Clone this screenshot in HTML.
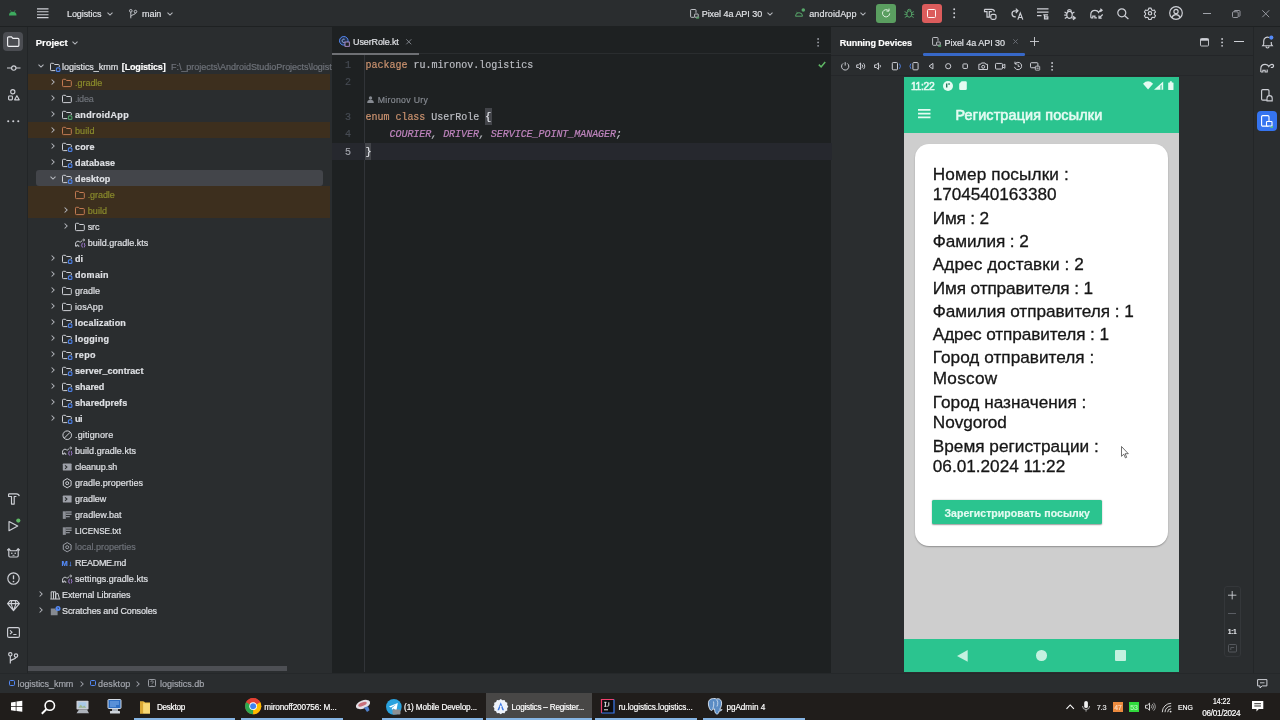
<!DOCTYPE html>
<html lang="ru"><head><meta charset="utf-8"><title>Logistics – UserRole.kt</title>
<style>
*{box-sizing:border-box;margin:0;padding:0}
html,body{width:1280px;height:720px;overflow:hidden;background:#2a2d2f}
body{font-family:"Liberation Sans",sans-serif;font-size:9px;color:#dfe1e5;position:relative;font-variant-ligatures:none}
.abs,.sel,.exc,.t{position:absolute}
.t{white-space:nowrap;-webkit-text-stroke-width:.18px;font-variant-ligatures:none!important}
svg{display:block;overflow:visible}
.exc{left:27.700px;width:302px;height:16px;background:#3d2f1e}
.sel{left:36px;width:287px;height:16px;background:#43454a;border-radius:3px}
.ph{color:#151515}
</style></head><body><div id="root" style="position:absolute;left:0;top:0;width:1280px;height:720px;will-change:transform">

<div class="abs" style="left:0;top:0;width:1280px;height:26.500px;background:#2a2d2f"></div>
<div class="abs" style="left:0;top:26.200px;width:1280px;height:1px;background:#1e2122"></div>
<div class="abs" style="left:26.700px;top:27px;width:1px;height:646px;background:#222527"></div>
<div class="abs" style="left:331.500px;top:27px;width:499.800px;height:646px;background:#1e2122"></div>
<div class="abs" style="left:1253px;top:27px;width:1px;height:646px;background:#232628"></div>
<div class="abs" style="left:0;top:672.500px;width:1280px;height:1px;background:#25282a"></div>
<svg class="abs" style="left:8.5px;top:9.7px" width="7.5" height="5.5" viewBox="0 0 7.5 5.5" ><path d="M0 5.500a3.750 3.750 0 0 1 7.500 0z" fill="#3dab5f"/><path d="M1.300 .3l1 1.500M6.200 .3l-1 1.500" stroke="#3dab5f" stroke-width=".7"/></svg>
<svg class="abs" style="left:37px;top:8px" width="11.5" height="10.5" viewBox="0 0 11.5 10.5" ><path d="M0 .9h11.500M0 3.800h11.500M0 6.700h11.500M0 9.600h11.500" stroke="#ced0d6" stroke-width="1.100"/></svg>
<div class="t" style="left:67.00px;top:10px;font:9px/1 'Liberation Sans',sans-serif;color:#dfe1e5;letter-spacing:-0.080px">Logistics</div>
<svg class="abs" style="left:107px;top:11.8px" width="6" height="4" viewBox="0 0 6 4" ><path d="M.5 .6L3 3.100 5.500 .6" fill="none" stroke="#b4b7bd" stroke-width="1.050"/></svg>
<svg class="abs" style="left:128.5px;top:8.8px" width="8.5" height="9.5" viewBox="0 0 8.5 9.5" ><circle cx="1.800" cy="1.800" r="1.300" fill="none" stroke="#ced0d6" stroke-width=".9"/><circle cx="6.500" cy="2.600" r="1.300" fill="none" stroke="#ced0d6" stroke-width=".9"/><path d="M1.800 3.100v6.200M6.500 3.900c0 2.200-4.700 1.600-4.700 3.600" fill="none" stroke="#ced0d6" stroke-width=".9"/></svg>
<div class="t" style="left:142.00px;top:10px;font:9px/1 'Liberation Sans',sans-serif;color:#dfe1e5;letter-spacing:-0.054px">main</div>
<svg class="abs" style="left:167.3px;top:11.8px" width="6" height="4" viewBox="0 0 6 4" ><path d="M.5 .6L3 3.100 5.500 .6" fill="none" stroke="#b4b7bd" stroke-width="1.050"/></svg>
<svg class="abs" style="left:689.5px;top:9px" width="9" height="9.5" viewBox="0 0 9 9.5" ><path d="M4.300 8.300H1.400a.8.800 0 0 1-.8-.8V1.300a.8.800 0 0 1 .8-.8h3.800a.8.800 0 0 1 .8.800v2.500" fill="none" stroke="#ced0d6" stroke-width=".9"/><rect x="4.600" y="5" width="3.600" height="3.200" rx=".4" fill="none" stroke="#ced0d6" stroke-width=".9"/><path d="M6.200 9.300l2.600-1.500v1.500z" fill="#57a66a" stroke="#57a66a" stroke-width=".6"/></svg>
<div class="t" style="left:701.70px;top:10px;font:9px/1 'Liberation Sans',sans-serif;color:#dfe1e5;letter-spacing:-0.036px">Pixel 4a API 30</div>
<svg class="abs" style="left:767.3px;top:11.8px" width="6" height="4" viewBox="0 0 6 4" ><path d="M.5 .6L3 3.100 5.500 .6" fill="none" stroke="#b4b7bd" stroke-width="1.050"/></svg>
<svg class="abs" style="left:795px;top:8px" width="10.5" height="9" viewBox="0 0 10.5 9" ><path d="M.5 8.200a3.500 3.500 0 0 1 7 0z" fill="none" stroke="#57a66a" stroke-width="1"/><path d="M1.600 3.800l1 1.300" stroke="#57a66a" stroke-width=".8"/><circle cx="8.300" cy="2" r="1.800" fill="#57a66a"/></svg>
<div class="t" style="left:809.20px;top:10px;font:9px/1 'Liberation Sans',sans-serif;color:#dfe1e5;letter-spacing:0.145px">androidApp</div>
<svg class="abs" style="left:860px;top:11.8px" width="6" height="4" viewBox="0 0 6 4" ><path d="M.5 .6L3 3.100 5.500 .6" fill="none" stroke="#b4b7bd" stroke-width="1.050"/></svg>
<div class="abs" style="left:876.200px;top:3.700px;width:20px;height:19.600px;background:#5a9e60;border-radius:3px"></div>
<svg class="abs" style="left:881px;top:8.3px" width="10.5" height="10.5" viewBox="0 0 10.5 10.5" ><path d="M8.700 5.400a3.600 3.600 0 1 1-1.100-2.700" fill="none" stroke="#dff0e0" stroke-width="1"/><path d="M8 .6v2.500H5.500" fill="none" stroke="#dff0e0" stroke-width="1"/></svg>
<svg class="abs" style="left:903.5px;top:8.2px" width="10.5" height="10.5" viewBox="0 0 10.5 10.5" ><ellipse cx="5.250" cy="6" rx="2.500" ry="3.200" fill="none" stroke="#57a66a" stroke-width="1"/><path d="M3.500 3a1.750 1.750 0 0 1 3.500 0M.6 3.600l2.300 1.200M9.900 3.600L7.600 4.800M.3 6.400h2.400M10.200 6.400H7.800M.8 9.500L3 8.200M9.700 9.500L7.500 8.200" fill="none" stroke="#57a66a" stroke-width=".9"/></svg>
<div class="abs" style="left:921.700px;top:3.700px;width:20px;height:19.600px;background:#db5c5c;border-radius:3px"></div>
<div class="abs" style="left:927.200px;top:9px;width:9px;height:9px;border:1.100px solid #fff3f3;border-radius:1.500px"></div>
<svg class="abs" style="left:952.8px;top:8.2px" width="2.4" height="10.5" viewBox="0 0 2.4 10.5" ><circle cx="1.200" cy="1.200" r=".95" fill="#ced0d6"/><circle cx="1.200" cy="5.250" r=".95" fill="#ced0d6"/><circle cx="1.200" cy="9.300" r=".95" fill="#ced0d6"/></svg>
<svg class="abs" style="left:983.5px;top:7.5px" width="13" height="12" viewBox="0 0 13 12" ><path d="M.5 1.300h7.300c1.500 0 2.500 1 2.700 2.300M.5 1.300v2.400h2.500v5.500h2.300V3.700H7.800" fill="none" stroke="#ced0d6" stroke-width="1.200"/><rect x="6.800" y="6.300" width="5.200" height="5" rx="1.500" fill="none" stroke="#ced0d6" stroke-width="1.200"/></svg>
<svg class="abs" style="left:1010.5px;top:7.5px" width="12.5" height="12" viewBox="0 0 12.5 12" ><path d="M6.300 2.800H4a3 3 0 0 0 0 6h.8M4.800 .6l2.200 2.200-2.200 2.200" fill="none" stroke="#ced0d6" stroke-width="1.200"/><path d="M6.800 11.600L9.300 5l2.500 6.600M7.700 9.500h3.300" fill="none" stroke="#ced0d6" stroke-width="1.200"/></svg>
<svg class="abs" style="left:1037px;top:8px" width="11.5" height="11.5" viewBox="0 0 11.5 11.5" ><path d="M0 .8h11.500M0 4.200h11.500M0 7.600h4.500" fill="none" stroke="#ced0d6" stroke-width="1.200"/><path d="M6.300 6.800h4.700M7.500 6.800v4h3.300V8.900H7.500" fill="none" stroke="#ced0d6" stroke-width="1.200"/></svg>
<svg class="abs" style="left:1063.5px;top:7.5px" width="12" height="12" viewBox="0 0 12 12" ><ellipse cx="5.500" cy="6.800" rx="2.700" ry="3.500" fill="none" stroke="#ced0d6" stroke-width="1.200"/><path d="M3.600 3.600a1.900 1.900 0 0 1 3.800 0M.6 4l2.400 1.400M10.400 4L8 5.400M.2 7.200h2.600M.8 10.600l2.300-1.500" fill="none" stroke="#ced0d6" stroke-width="1.200"/><path d="M9 8.300l2.300 1.700L9 11.700M11.300 10H7.500" fill="none" stroke="#ced0d6" stroke-width="1.200"/></svg>
<svg class="abs" style="left:1089.5px;top:7.5px" width="13.5" height="12" viewBox="0 0 13.5 12" ><path d="M.8 9.800V6.600c0-2.600 1.700-4.300 4.200-4.300 1.700 0 3 .8 3.500 2.100.7-1.300 1.700-2.100 3-2.100M.8 9.800h2V8.100h2.100v1.700h2" fill="none" stroke="#ced0d6" stroke-width="1.200"/><path d="M12.700 6.500L9 10.200M9 7.500v2.700h2.700" fill="none" stroke="#ced0d6" stroke-width="1.200"/><path d="M10.300 .8l1.800 1.500-1.800 1.500" fill="none" stroke="#ced0d6" stroke-width="1.200"/></svg>
<svg class="abs" style="left:1117px;top:8.3px" width="12" height="11" viewBox="0 0 12 11" ><circle cx="4.800" cy="4.800" r="4" fill="none" stroke="#ced0d6" stroke-width="1.200"/><path d="M7.700 7.700l3.700 3.300" fill="none" stroke="#ced0d6" stroke-width="1.200"/></svg>
<svg class="abs" style="left:1143.5px;top:7.3px" width="12" height="12.6" viewBox="0 0 12 12.6" ><path d="M4.700 .6h2.600l.4 1.700 1.500.9 1.700-.5 1.300 2.200-1.300 1.200v1.700l1.300 1.200-1.300 2.200-1.700-.5-1.500.9-.4 1.700H4.700l-.4-1.700-1.500-.9-1.700.5L-.2 9l1.300-1.200V6.100L-.2 4.900l1.300-2.200 1.700.5 1.500-.9z" transform="translate(.55 .6) scale(.9)" fill="none" stroke="#ced0d6" stroke-width="1.200" stroke-linejoin="round"/><circle cx="6" cy="6.300" r="1.700" fill="none" stroke="#ced0d6" stroke-width="1.200"/></svg>
<svg class="abs" style="left:1169px;top:6.3px" width="14" height="14" viewBox="0 0 14 14" ><circle cx="7" cy="7" r="6.300" fill="none" stroke="#ced0d6" stroke-width="1.200"/><circle cx="7" cy="5.500" r="2.100" fill="none" stroke="#ced0d6" stroke-width="1.200"/><path d="M2.900 11.700a4.300 4.300 0 0 1 8.200 0" fill="none" stroke="#ced0d6" stroke-width="1.200"/></svg>
<div class="abs" style="left:1202.800px;top:13px;width:8.200px;height:1px;background:#a0a3aa"></div>
<svg class="abs" style="left:1232px;top:9.5px" width="8.5" height="8" viewBox="0 0 8.5 8" ><rect x=".5" y="1.800" width="5.700" height="5.700" rx="1" fill="none" stroke="#a0a3aa" stroke-width=".9"/><path d="M2.200 1.800V1.300a.8.800 0 0 1 .8-.8h4.200a.8.800 0 0 1 .8.800v4.200a.8.800 0 0 1-.8.800h-.6" fill="none" stroke="#a0a3aa" stroke-width=".9"/></svg>
<svg class="abs" style="left:1262px;top:9.7px" width="7.5" height="7.5" viewBox="0 0 7.5 7.5" ><path d="M.3 .3l6.900 6.900M7.200 .3L.3 7.200" stroke="#a0a3aa" stroke-width=".9"/></svg>
<div class="abs" style="left:3.300px;top:31.700px;width:20px;height:19.600px;background:#4b4d52;border-radius:4px"></div>
<svg class="abs" style="left:7px;top:36px" width="12.5" height="11" viewBox="0 0 12.5 11" ><path d="M.6 1.800a1 1 0 0 1 1-1h2.900l1.400 1.500h5a1 1 0 0 1 1 1v6a1 1 0 0 1-1 1H1.600a1 1 0 0 1-1-1z" fill="none" stroke="#f0f1f4" stroke-width="1.150"/></svg>
<svg class="abs" style="left:6.5px;top:64.5px" width="13.5" height="6" viewBox="0 0 13.5 6" ><circle cx="6.750" cy="3" r="2.200" fill="none" stroke="#ced0d6" stroke-width="1.150"/><path d="M0 3h4.500M9 3h4.500" fill="none" stroke="#ced0d6" stroke-width="1.150"/></svg>
<svg class="abs" style="left:7.5px;top:88.5px" width="12" height="12.5" viewBox="0 0 12 12.5" ><circle cx="4.800" cy="2.700" r="2.100" fill="none" stroke="#ced0d6" stroke-width="1.150"/><rect x=".6" y="7" width="3.800" height="3.800" rx=".8" fill="none" stroke="#ced0d6" stroke-width="1.150"/><path d="M8.900 6.700l2.300 4.100H6.600z" fill="none" stroke="#ced0d6" stroke-width="1.150" stroke-linejoin="round"/></svg>
<svg class="abs" style="left:7px;top:119.6px" width="12.5" height="2.4" viewBox="0 0 12.5 2.4" ><circle cx="1.200" cy="1.200" r="1.050" fill="#ced0d6"/><circle cx="6.250" cy="1.200" r="1.050" fill="#ced0d6"/><circle cx="11.300" cy="1.200" r="1.050" fill="#ced0d6"/></svg>
<svg class="abs" style="left:7.5px;top:492px" width="12" height="13" viewBox="0 0 12 13" ><path d="M.6 1.800h7.800c1.500 0 2.600 1 2.900 2.400M.6 1.800v2.700h2.900v7.600h2.700V4.500h2.200" fill="none" stroke="#ced0d6" stroke-width="1.150" stroke-linejoin="round"/></svg>
<svg class="abs" style="left:7.5px;top:518px" width="13" height="13.5" viewBox="0 0 13 13.5" ><path d="M1 3.500l8.700 4.600L1 12.700z" fill="none" stroke="#ced0d6" stroke-width="1.150" stroke-linejoin="round"/><circle cx="10.300" cy="2.600" r="2.100" fill="#5fb865"/></svg>
<svg class="abs" style="left:7px;top:546px" width="13" height="12" viewBox="0 0 13 12" ><path d="M1.800 2.500l1.700 2.200h6l1.700-2.200v7.300a1.200 1.200 0 0 1-1.200 1.200H3a1.200 1.200 0 0 1-1.200-1.200zM0 3.800h1.800M11.200 3.800H13" fill="none" stroke="#ced0d6" stroke-width="1.150" stroke-linejoin="round"/><circle cx="4.800" cy="7.300" r=".8" fill="#ced0d6"/><circle cx="8.200" cy="7.300" r=".8" fill="#ced0d6"/><path d="M5.500 9.300h2" stroke="#ced0d6" stroke-width=".9"/></svg>
<svg class="abs" style="left:7px;top:572px" width="13" height="13" viewBox="0 0 13 13" ><circle cx="6.500" cy="6.500" r="5.700" fill="none" stroke="#ced0d6" stroke-width="1.150"/><path d="M6.500 3.300v4" stroke="#ced0d6" stroke-width="1.300"/><circle cx="6.500" cy="9.500" r=".85" fill="#ced0d6"/></svg>
<svg class="abs" style="left:7px;top:599.7px" width="13" height="11.3" viewBox="0 0 13 11.3" ><path d="M3.200 .6h6.600l2.600 3L6.500 10.600.6 3.600zM.6 3.600h11.800M4.800 .6L4 3.600l2.500 7 2.500-7L8.200 .6" fill="none" stroke="#ced0d6" stroke-width="1.150" stroke-linejoin="round"/></svg>
<svg class="abs" style="left:7px;top:626.6px" width="13" height="11" viewBox="0 0 13 11" ><rect x=".6" y=".6" width="11.800" height="9.800" rx="1.500" fill="none" stroke="#ced0d6" stroke-width="1.150"/><path d="M3 3.300l2 1.900-2 1.900M6.300 7.500h3.200" fill="none" stroke="#ced0d6" stroke-width="1.150"/></svg>
<svg class="abs" style="left:8px;top:652.3px" width="10.5" height="12" viewBox="0 0 10.5 12" ><circle cx="2.300" cy="2.300" r="1.700" fill="none" stroke="#ced0d6" stroke-width="1.150"/><circle cx="8" cy="3.600" r="1.700" fill="none" stroke="#ced0d6" stroke-width="1.150"/><path d="M2.300 4v7.500M8 5.300c0 2.600-5.700 1.600-5.700 4.200" fill="none" stroke="#ced0d6" stroke-width="1.150"/></svg>
<div class="t" style="left:35.80px;top:38px;font:bold 9.5px/1 'Liberation Sans',sans-serif;color:#fff;letter-spacing:-0.074px">Project</div>
<svg class="abs" style="left:72px;top:40.6px" width="6" height="4" viewBox="0 0 6 4" ><path d="M.5 .6L3 3.100 5.500 .6" fill="none" stroke="#b4b7bd" stroke-width="1.050"/></svg>
<div class="abs" style="left:28px;top:27px;width:303.500px;height:646px;overflow:hidden"><div class="abs" style="left:-28px;top:-27px;width:400px;height:700px">
<svg class="abs" style="left:38px;top:64.3px" width="6" height="4" viewBox="0 0 6 4" ><path d="M.5 .6L3 3.100 5.500 .6" fill="none" stroke="#b4b7bd" stroke-width="1.050"/></svg>
<svg class="abs" style="left:49.5px;top:61.6px" width="10.5" height="10" viewBox="0 0 10.5 10" ><path d="M5.300 8.600H1.400a.9.9 0 0 1-.9-.9V2.200a.9.9 0 0 1 .9-.9h2.100l1.100 1.200h3.800a.9.9 0 0 1 .9.900v1.600" fill="none" stroke="#ced0d6" stroke-width="1"/><rect x="6.400" y="5.900" width="3.500" height="3.500" rx="1" fill="none" stroke="#4d80e6" stroke-width="1.150"/></svg>
<div class="t" style="left:62.00px;top:63px;font:9px/1 'Liberation Sans',sans-serif;color:#dfe1e5;letter-spacing:-0.017px">logistics_kmm</div>
<div class="t" style="left:121.80px;top:63px;font:bold 9px/1 'Liberation Sans',sans-serif;color:#fff;letter-spacing:-0.165px">[Logistics]</div>
<div class="t" style="left:171.00px;top:63px;font:9px/1 'Liberation Sans',sans-serif;color:#6f737a;letter-spacing:-0.033px">F:\_projects\AndroidStudioProjects\logistics_kmm</div>
<div class="exc" style="top:74px"></div>
<svg class="abs" style="left:51px;top:79.3px" width="4" height="6" viewBox="0 0 4 6" ><path d="M.6 .5L3.100 3 .6 5.500" fill="none" stroke="#b4b7bd" stroke-width="1.050"/></svg>
<svg class="abs" style="left:61.8px;top:77.6px" width="10.5" height="10" viewBox="0 0 10.5 10" ><path d="M.5 2.200a.9.9 0 0 1 .9-.9h2.100l1.100 1.200h3.800a.9.9 0 0 1 .9.900v4.300a.9.9 0 0 1-.9.900H1.400a.9.9 0 0 1-.9-.9z" fill="none" stroke="#c27a52" stroke-width="1"/></svg>
<div class="t" style="left:75.00px;top:79px;font:9px/1 'Liberation Sans',sans-serif;color:#8a8b2c;letter-spacing:-0.033px">.gradle</div>
<svg class="abs" style="left:51px;top:95.3px" width="4" height="6" viewBox="0 0 4 6" ><path d="M.6 .5L3.100 3 .6 5.500" fill="none" stroke="#b4b7bd" stroke-width="1.050"/></svg>
<svg class="abs" style="left:61.8px;top:93.6px" width="10.5" height="10" viewBox="0 0 10.5 10" ><path d="M.5 2.200a.9.9 0 0 1 .9-.9h2.100l1.100 1.200h3.800a.9.9 0 0 1 .9.900v4.300a.9.9 0 0 1-.9.900H1.400a.9.9 0 0 1-.9-.9z" fill="none" stroke="#ced0d6" stroke-width="1"/></svg>
<div class="t" style="left:75.00px;top:95px;font:9px/1 'Liberation Sans',sans-serif;color:#6f737a;letter-spacing:-0.206px">.idea</div>
<svg class="abs" style="left:51px;top:111.3px" width="4" height="6" viewBox="0 0 4 6" ><path d="M.6 .5L3.100 3 .6 5.500" fill="none" stroke="#b4b7bd" stroke-width="1.050"/></svg>
<svg class="abs" style="left:61.8px;top:109.6px" width="10.5" height="10" viewBox="0 0 10.5 10" ><path d="M5.300 8.600H1.400a.9.9 0 0 1-.9-.9V2.200a.9.9 0 0 1 .9-.9h2.100l1.100 1.200h3.800a.9.9 0 0 1 .9.900v1.600" fill="none" stroke="#ced0d6" stroke-width="1"/><rect x="6.400" y="5.900" width="3.500" height="3.500" rx="1" fill="none" stroke="#4c9c64" stroke-width="1.150"/></svg>
<div class="t" style="left:75.00px;top:111px;font:bold 9px/1 'Liberation Sans',sans-serif;color:#dfe1e5;letter-spacing:0.350px">androidApp</div>
<div class="exc" style="top:122px"></div>
<svg class="abs" style="left:51px;top:127.30000000000001px" width="4" height="6" viewBox="0 0 4 6" ><path d="M.6 .5L3.100 3 .6 5.500" fill="none" stroke="#b4b7bd" stroke-width="1.050"/></svg>
<svg class="abs" style="left:61.8px;top:125.6px" width="10.5" height="10" viewBox="0 0 10.5 10" ><path d="M.5 2.200a.9.9 0 0 1 .9-.9h2.100l1.100 1.200h3.800a.9.9 0 0 1 .9.900v4.300a.9.9 0 0 1-.9.900H1.400a.9.9 0 0 1-.9-.9z" fill="none" stroke="#c27a52" stroke-width="1"/></svg>
<div class="t" style="left:75.00px;top:127px;font:9px/1 'Liberation Sans',sans-serif;color:#8a8b2c;letter-spacing:0.117px">build</div>
<svg class="abs" style="left:51px;top:143.3px" width="4" height="6" viewBox="0 0 4 6" ><path d="M.6 .5L3.100 3 .6 5.500" fill="none" stroke="#b4b7bd" stroke-width="1.050"/></svg>
<svg class="abs" style="left:61.8px;top:141.6px" width="10.5" height="10" viewBox="0 0 10.5 10" ><path d="M5.300 8.600H1.400a.9.9 0 0 1-.9-.9V2.200a.9.9 0 0 1 .9-.9h2.100l1.100 1.200h3.800a.9.9 0 0 1 .9.900v1.600" fill="none" stroke="#ced0d6" stroke-width="1"/><rect x="6.400" y="5.900" width="3.500" height="3.500" rx="1" fill="none" stroke="#4d80e6" stroke-width="1.150"/></svg>
<div class="t" style="left:75.00px;top:143px;font:bold 9px/1 'Liberation Sans',sans-serif;color:#dfe1e5;letter-spacing:0.171px">core</div>
<svg class="abs" style="left:51px;top:159.3px" width="4" height="6" viewBox="0 0 4 6" ><path d="M.6 .5L3.100 3 .6 5.500" fill="none" stroke="#b4b7bd" stroke-width="1.050"/></svg>
<svg class="abs" style="left:61.8px;top:157.6px" width="10.5" height="10" viewBox="0 0 10.5 10" ><path d="M5.300 8.600H1.400a.9.9 0 0 1-.9-.9V2.200a.9.9 0 0 1 .9-.9h2.100l1.100 1.200h3.800a.9.9 0 0 1 .9.900v1.600" fill="none" stroke="#ced0d6" stroke-width="1"/><rect x="6.400" y="5.900" width="3.500" height="3.500" rx="1" fill="none" stroke="#4d80e6" stroke-width="1.150"/></svg>
<div class="t" style="left:75.00px;top:159px;font:bold 9px/1 'Liberation Sans',sans-serif;color:#dfe1e5;letter-spacing:0.146px">database</div>
<div class="sel" style="top:170px"></div>
<svg class="abs" style="left:50px;top:176.3px" width="6" height="4" viewBox="0 0 6 4" ><path d="M.5 .6L3 3.100 5.500 .6" fill="none" stroke="#b4b7bd" stroke-width="1.050"/></svg>
<svg class="abs" style="left:61.8px;top:173.6px" width="10.5" height="10" viewBox="0 0 10.5 10" ><path d="M5.300 8.600H1.400a.9.9 0 0 1-.9-.9V2.200a.9.9 0 0 1 .9-.9h2.100l1.100 1.200h3.800a.9.9 0 0 1 .9.900v1.600" fill="none" stroke="#ced0d6" stroke-width="1"/><rect x="6.400" y="5.900" width="3.500" height="3.500" rx="1" fill="none" stroke="#4d80e6" stroke-width="1.150"/></svg>
<div class="t" style="left:75.00px;top:175px;font:bold 9px/1 'Liberation Sans',sans-serif;color:#dfe1e5;letter-spacing:0.141px">desktop</div>
<div class="exc" style="top:186px"></div>
<svg class="abs" style="left:74.8px;top:189.6px" width="10.5" height="10" viewBox="0 0 10.5 10" ><path d="M.5 2.200a.9.9 0 0 1 .9-.9h2.100l1.100 1.200h3.800a.9.9 0 0 1 .9.900v4.300a.9.9 0 0 1-.9.900H1.400a.9.9 0 0 1-.9-.9z" fill="none" stroke="#c27a52" stroke-width="1"/></svg>
<div class="t" style="left:87.70px;top:191px;font:9px/1 'Liberation Sans',sans-serif;color:#8a8b2c;letter-spacing:-0.076px">.gradle</div>
<div class="exc" style="top:202px"></div>
<svg class="abs" style="left:64px;top:207.3px" width="4" height="6" viewBox="0 0 4 6" ><path d="M.6 .5L3.100 3 .6 5.500" fill="none" stroke="#b4b7bd" stroke-width="1.050"/></svg>
<svg class="abs" style="left:74.8px;top:205.6px" width="10.5" height="10" viewBox="0 0 10.5 10" ><path d="M.5 2.200a.9.9 0 0 1 .9-.9h2.100l1.100 1.200h3.800a.9.9 0 0 1 .9.900v4.300a.9.9 0 0 1-.9.900H1.400a.9.9 0 0 1-.9-.9z" fill="none" stroke="#c27a52" stroke-width="1"/></svg>
<div class="t" style="left:87.70px;top:207px;font:9px/1 'Liberation Sans',sans-serif;color:#8a8b2c;letter-spacing:0.097px">build</div>
<svg class="abs" style="left:64px;top:223.3px" width="4" height="6" viewBox="0 0 4 6" ><path d="M.6 .5L3.100 3 .6 5.500" fill="none" stroke="#b4b7bd" stroke-width="1.050"/></svg>
<svg class="abs" style="left:74.8px;top:221.6px" width="10.5" height="10" viewBox="0 0 10.5 10" ><path d="M.5 2.200a.9.9 0 0 1 .9-.9h2.100l1.100 1.200h3.800a.9.9 0 0 1 .9.900v4.300a.9.9 0 0 1-.9.900H1.400a.9.9 0 0 1-.9-.9z" fill="none" stroke="#ced0d6" stroke-width="1"/></svg>
<div class="t" style="left:87.70px;top:223px;font:9px/1 'Liberation Sans',sans-serif;color:#dfe1e5;letter-spacing:-0.133px">src</div>
<svg class="abs" style="left:74.8px;top:237.6px" width="10.5" height="10" viewBox="0 0 10.5 10" ><path d="M.5 8.200V6.200c0-1.800 1-3 2.500-3 1.100 0 1.700.5 2.100 1.200.4-.8 1-1.300 1.800-1.400M.5 8.200h1.300V7h1.300v1.200h1.300" fill="none" stroke="#ced0d6" stroke-width=".95"/><path d="M7.600 5c-.9 0-.3 1.900-1.200 2.200.9.300.3 2.200 1.200 2.200M8.900 5c.9 0 .3 1.900 1.200 2.200-.9.300-.3 2.200-1.200 2.200" fill="none" stroke="#b589ec" stroke-width=".95"/><circle cx="8.700" cy="2" r=".9" fill="none" stroke="#ced0d6" stroke-width=".8"/></svg>
<div class="t" style="left:87.70px;top:239px;font:9px/1 'Liberation Sans',sans-serif;color:#dfe1e5;letter-spacing:0.003px">build.gradle.kts</div>
<svg class="abs" style="left:51px;top:255.3px" width="4" height="6" viewBox="0 0 4 6" ><path d="M.6 .5L3.100 3 .6 5.500" fill="none" stroke="#b4b7bd" stroke-width="1.050"/></svg>
<svg class="abs" style="left:61.8px;top:253.6px" width="10.5" height="10" viewBox="0 0 10.5 10" ><path d="M5.300 8.600H1.400a.9.9 0 0 1-.9-.9V2.200a.9.9 0 0 1 .9-.9h2.100l1.100 1.200h3.800a.9.9 0 0 1 .9.900v1.600" fill="none" stroke="#ced0d6" stroke-width="1"/><rect x="6.400" y="5.900" width="3.500" height="3.500" rx="1" fill="none" stroke="#4d80e6" stroke-width="1.150"/></svg>
<div class="t" style="left:75.00px;top:255px;font:bold 9px/1 'Liberation Sans',sans-serif;color:#dfe1e5;letter-spacing:0.000px">di</div>
<svg class="abs" style="left:51px;top:271.3px" width="4" height="6" viewBox="0 0 4 6" ><path d="M.6 .5L3.100 3 .6 5.500" fill="none" stroke="#b4b7bd" stroke-width="1.050"/></svg>
<svg class="abs" style="left:61.8px;top:269.6px" width="10.5" height="10" viewBox="0 0 10.5 10" ><path d="M5.300 8.600H1.400a.9.9 0 0 1-.9-.9V2.200a.9.9 0 0 1 .9-.9h2.100l1.100 1.200h3.800a.9.9 0 0 1 .9.900v1.600" fill="none" stroke="#ced0d6" stroke-width="1"/><rect x="6.400" y="5.900" width="3.500" height="3.500" rx="1" fill="none" stroke="#4d80e6" stroke-width="1.150"/></svg>
<div class="t" style="left:75.00px;top:271px;font:bold 9px/1 'Liberation Sans',sans-serif;color:#dfe1e5;letter-spacing:0.297px">domain</div>
<svg class="abs" style="left:51px;top:287.3px" width="4" height="6" viewBox="0 0 4 6" ><path d="M.6 .5L3.100 3 .6 5.500" fill="none" stroke="#b4b7bd" stroke-width="1.050"/></svg>
<svg class="abs" style="left:61.8px;top:285.6px" width="10.5" height="10" viewBox="0 0 10.5 10" ><path d="M.5 2.200a.9.9 0 0 1 .9-.9h2.100l1.100 1.200h3.800a.9.9 0 0 1 .9.900v4.300a.9.9 0 0 1-.9.900H1.400a.9.9 0 0 1-.9-.9z" fill="none" stroke="#ced0d6" stroke-width="1"/></svg>
<div class="t" style="left:75.00px;top:287px;font:9px/1 'Liberation Sans',sans-serif;color:#dfe1e5;letter-spacing:-0.005px">gradle</div>
<svg class="abs" style="left:51px;top:303.3px" width="4" height="6" viewBox="0 0 4 6" ><path d="M.6 .5L3.100 3 .6 5.500" fill="none" stroke="#b4b7bd" stroke-width="1.050"/></svg>
<svg class="abs" style="left:61.8px;top:301.6px" width="10.5" height="10" viewBox="0 0 10.5 10" ><path d="M.5 2.200a.9.9 0 0 1 .9-.9h2.100l1.100 1.200h3.800a.9.9 0 0 1 .9.900v4.300a.9.9 0 0 1-.9.900H1.400a.9.9 0 0 1-.9-.9z" fill="none" stroke="#ced0d6" stroke-width="1"/></svg>
<div class="t" style="left:75.00px;top:303px;font:9px/1 'Liberation Sans',sans-serif;color:#dfe1e5;letter-spacing:0.078px">iosApp</div>
<svg class="abs" style="left:51px;top:319.3px" width="4" height="6" viewBox="0 0 4 6" ><path d="M.6 .5L3.100 3 .6 5.500" fill="none" stroke="#b4b7bd" stroke-width="1.050"/></svg>
<svg class="abs" style="left:61.8px;top:317.6px" width="10.5" height="10" viewBox="0 0 10.5 10" ><path d="M5.300 8.600H1.400a.9.9 0 0 1-.9-.9V2.200a.9.9 0 0 1 .9-.9h2.100l1.100 1.200h3.800a.9.9 0 0 1 .9.900v1.600" fill="none" stroke="#ced0d6" stroke-width="1"/><rect x="6.400" y="5.900" width="3.500" height="3.500" rx="1" fill="none" stroke="#4d80e6" stroke-width="1.150"/></svg>
<div class="t" style="left:75.00px;top:319px;font:bold 9px/1 'Liberation Sans',sans-serif;color:#dfe1e5;letter-spacing:0.165px">localization</div>
<svg class="abs" style="left:51px;top:335.3px" width="4" height="6" viewBox="0 0 4 6" ><path d="M.6 .5L3.100 3 .6 5.500" fill="none" stroke="#b4b7bd" stroke-width="1.050"/></svg>
<svg class="abs" style="left:61.8px;top:333.6px" width="10.5" height="10" viewBox="0 0 10.5 10" ><path d="M5.300 8.600H1.400a.9.9 0 0 1-.9-.9V2.200a.9.9 0 0 1 .9-.9h2.100l1.100 1.200h3.800a.9.9 0 0 1 .9.900v1.600" fill="none" stroke="#ced0d6" stroke-width="1"/><rect x="6.400" y="5.900" width="3.500" height="3.500" rx="1" fill="none" stroke="#4d80e6" stroke-width="1.150"/></svg>
<div class="t" style="left:75.00px;top:335px;font:bold 9px/1 'Liberation Sans',sans-serif;color:#dfe1e5;letter-spacing:0.257px">logging</div>
<svg class="abs" style="left:51px;top:351.3px" width="4" height="6" viewBox="0 0 4 6" ><path d="M.6 .5L3.100 3 .6 5.500" fill="none" stroke="#b4b7bd" stroke-width="1.050"/></svg>
<svg class="abs" style="left:61.8px;top:349.6px" width="10.5" height="10" viewBox="0 0 10.5 10" ><path d="M5.300 8.600H1.400a.9.9 0 0 1-.9-.9V2.200a.9.9 0 0 1 .9-.9h2.100l1.100 1.200h3.800a.9.9 0 0 1 .9.900v1.600" fill="none" stroke="#ced0d6" stroke-width="1"/><rect x="6.400" y="5.900" width="3.500" height="3.500" rx="1" fill="none" stroke="#4d80e6" stroke-width="1.150"/></svg>
<div class="t" style="left:75.00px;top:351px;font:bold 9px/1 'Liberation Sans',sans-serif;color:#dfe1e5;letter-spacing:0.321px">repo</div>
<svg class="abs" style="left:51px;top:367.3px" width="4" height="6" viewBox="0 0 4 6" ><path d="M.6 .5L3.100 3 .6 5.500" fill="none" stroke="#b4b7bd" stroke-width="1.050"/></svg>
<svg class="abs" style="left:61.8px;top:365.6px" width="10.5" height="10" viewBox="0 0 10.5 10" ><path d="M5.300 8.600H1.400a.9.9 0 0 1-.9-.9V2.200a.9.9 0 0 1 .9-.9h2.100l1.100 1.200h3.800a.9.9 0 0 1 .9.900v1.600" fill="none" stroke="#ced0d6" stroke-width="1"/><rect x="6.400" y="5.900" width="3.500" height="3.500" rx="1" fill="none" stroke="#4d80e6" stroke-width="1.150"/></svg>
<div class="t" style="left:75.00px;top:367px;font:bold 9px/1 'Liberation Sans',sans-serif;color:#dfe1e5;letter-spacing:0.064px">server_contract</div>
<svg class="abs" style="left:51px;top:383.3px" width="4" height="6" viewBox="0 0 4 6" ><path d="M.6 .5L3.100 3 .6 5.500" fill="none" stroke="#b4b7bd" stroke-width="1.050"/></svg>
<svg class="abs" style="left:61.8px;top:381.6px" width="10.5" height="10" viewBox="0 0 10.5 10" ><path d="M5.300 8.600H1.400a.9.9 0 0 1-.9-.9V2.200a.9.9 0 0 1 .9-.9h2.100l1.100 1.200h3.800a.9.9 0 0 1 .9.900v1.600" fill="none" stroke="#ced0d6" stroke-width="1"/><rect x="6.400" y="5.900" width="3.500" height="3.500" rx="1" fill="none" stroke="#4d80e6" stroke-width="1.150"/></svg>
<div class="t" style="left:75.00px;top:383px;font:bold 9px/1 'Liberation Sans',sans-serif;color:#dfe1e5;letter-spacing:-0.036px">shared</div>
<svg class="abs" style="left:51px;top:399.3px" width="4" height="6" viewBox="0 0 4 6" ><path d="M.6 .5L3.100 3 .6 5.500" fill="none" stroke="#b4b7bd" stroke-width="1.050"/></svg>
<svg class="abs" style="left:61.8px;top:397.6px" width="10.5" height="10" viewBox="0 0 10.5 10" ><path d="M5.300 8.600H1.400a.9.9 0 0 1-.9-.9V2.200a.9.9 0 0 1 .9-.9h2.100l1.100 1.200h3.800a.9.9 0 0 1 .9.900v1.600" fill="none" stroke="#ced0d6" stroke-width="1"/><rect x="6.400" y="5.900" width="3.500" height="3.500" rx="1" fill="none" stroke="#4d80e6" stroke-width="1.150"/></svg>
<div class="t" style="left:75.00px;top:399px;font:bold 9px/1 'Liberation Sans',sans-serif;color:#dfe1e5;letter-spacing:0.061px">sharedprefs</div>
<svg class="abs" style="left:51px;top:415.3px" width="4" height="6" viewBox="0 0 4 6" ><path d="M.6 .5L3.100 3 .6 5.500" fill="none" stroke="#b4b7bd" stroke-width="1.050"/></svg>
<svg class="abs" style="left:61.8px;top:413.6px" width="10.5" height="10" viewBox="0 0 10.5 10" ><path d="M5.300 8.600H1.400a.9.9 0 0 1-.9-.9V2.200a.9.9 0 0 1 .9-.9h2.100l1.100 1.200h3.800a.9.9 0 0 1 .9.900v1.600" fill="none" stroke="#ced0d6" stroke-width="1"/><rect x="6.400" y="5.900" width="3.500" height="3.500" rx="1" fill="none" stroke="#4d80e6" stroke-width="1.150"/></svg>
<div class="t" style="left:75.00px;top:415px;font:bold 9px/1 'Liberation Sans',sans-serif;color:#dfe1e5;letter-spacing:-0.400px">ui</div>
<svg class="abs" style="left:61.8px;top:429.6px" width="10.5" height="10" viewBox="0 0 10.5 10" ><circle cx="5.200" cy="5.200" r="4.300" fill="none" stroke="#ced0d6" stroke-width="1"/><path d="M2.300 8.100l5.800-5.800" stroke="#ced0d6" stroke-width="1"/></svg>
<div class="t" style="left:75.00px;top:431px;font:9px/1 'Liberation Sans',sans-serif;color:#dfe1e5;letter-spacing:0.127px">.gitignore</div>
<svg class="abs" style="left:61.8px;top:445.6px" width="10.5" height="10" viewBox="0 0 10.5 10" ><path d="M.5 8.200V6.200c0-1.800 1-3 2.500-3 1.100 0 1.700.5 2.100 1.200.4-.8 1-1.300 1.800-1.400M.5 8.200h1.300V7h1.300v1.200h1.300" fill="none" stroke="#ced0d6" stroke-width=".95"/><path d="M7.600 5c-.9 0-.3 1.900-1.200 2.200.9.300.3 2.200 1.200 2.200M8.900 5c.9 0 .3 1.900 1.200 2.200-.9.300-.3 2.200-1.200 2.200" fill="none" stroke="#b589ec" stroke-width=".95"/><circle cx="8.700" cy="2" r=".9" fill="none" stroke="#ced0d6" stroke-width=".8"/></svg>
<div class="t" style="left:75.00px;top:447px;font:9px/1 'Liberation Sans',sans-serif;color:#dfe1e5;letter-spacing:0.028px">build.gradle.kts</div>
<svg class="abs" style="left:61.8px;top:461.6px" width="10.5" height="10" viewBox="0 0 10.5 10" ><rect x=".8" y="1.600" width="8.800" height="7" rx=".7" fill="#9da0a8"/><path d="M3 3.400l1.900 1.700L3 6.800" fill="none" stroke="#2a2d2f" stroke-width="1.100"/></svg>
<div class="t" style="left:75.00px;top:463px;font:9px/1 'Liberation Sans',sans-serif;color:#dfe1e5;letter-spacing:-0.135px">cleanup.sh</div>
<svg class="abs" style="left:61.8px;top:477.6px" width="10.5" height="10" viewBox="0 0 10.5 10" ><path d="M5.200 .6l3.900 2.300v4.600L5.200 9.800 1.300 7.500V2.900z" fill="none" stroke="#ced0d6" stroke-width="1" stroke-linejoin="round"/><circle cx="5.200" cy="5.200" r="1.500" fill="none" stroke="#ced0d6" stroke-width="1"/></svg>
<div class="t" style="left:75.00px;top:479px;font:9px/1 'Liberation Sans',sans-serif;color:#dfe1e5;letter-spacing:0.027px">gradle.properties</div>
<svg class="abs" style="left:61.8px;top:493.6px" width="10.5" height="10" viewBox="0 0 10.5 10" ><rect x=".8" y="1.600" width="8.800" height="7" rx=".7" fill="#9da0a8"/><path d="M3 3.400l1.900 1.700L3 6.800" fill="none" stroke="#2a2d2f" stroke-width="1.100"/></svg>
<div class="t" style="left:75.00px;top:495px;font:9px/1 'Liberation Sans',sans-serif;color:#dfe1e5;letter-spacing:-0.033px">gradlew</div>
<svg class="abs" style="left:61.8px;top:509.6px" width="10.5" height="10" viewBox="0 0 10.5 10" ><path d="M.8 1.300h3v7.600h-3z" fill="#8c8f96"/><path d="M3.800 2h5.800M3.800 4.300h5.800M3.800 6.600h4" stroke="#8c8f96" stroke-width="1.400"/></svg>
<div class="t" style="left:75.00px;top:511px;font:9px/1 'Liberation Sans',sans-serif;color:#dfe1e5;letter-spacing:0.059px">gradlew.bat</div>
<svg class="abs" style="left:61.8px;top:525.6px" width="10.5" height="10" viewBox="0 0 10.5 10" ><path d="M.8 1.300h3v7.600h-3z" fill="#8c8f96"/><path d="M3.800 2h5.800M3.800 4.300h5.800M3.800 6.600h4" stroke="#8c8f96" stroke-width="1.400"/></svg>
<div class="t" style="left:75.00px;top:527px;font:9px/1 'Liberation Sans',sans-serif;color:#dfe1e5;transform:scaleX(0.9106);transform-origin:0 0">LICENSE.txt</div>
<svg class="abs" style="left:61.8px;top:541.6px" width="10.5" height="10" viewBox="0 0 10.5 10" ><path d="M5.200 .6l3.900 2.300v4.600L5.200 9.800 1.300 7.500V2.900z" fill="none" stroke="#9da0a8" stroke-width="1" stroke-linejoin="round"/><circle cx="5.200" cy="5.200" r="1.500" fill="none" stroke="#9da0a8" stroke-width="1"/></svg>
<div class="t" style="left:75.00px;top:543px;font:9px/1 'Liberation Sans',sans-serif;color:#6f737a;letter-spacing:-0.014px">local.properties</div>
<div class="t" style="left:61.50px;top:560px;font:bold 7.5px/1 'Liberation Sans',sans-serif;color:#548af7;letter-spacing:0.750px">M↓</div>
<div class="t" style="left:75.00px;top:559px;font:9px/1 'Liberation Sans',sans-serif;color:#dfe1e5;letter-spacing:-0.280px">README.md</div>
<svg class="abs" style="left:61.8px;top:573.6px" width="10.5" height="10" viewBox="0 0 10.5 10" ><path d="M.5 8.200V6.200c0-1.800 1-3 2.500-3 1.100 0 1.700.5 2.100 1.200.4-.8 1-1.300 1.800-1.400M.5 8.200h1.300V7h1.300v1.200h1.300" fill="none" stroke="#ced0d6" stroke-width=".95"/><path d="M7.600 5c-.9 0-.3 1.900-1.200 2.200.9.300.3 2.200 1.200 2.200M8.900 5c.9 0 .3 1.900 1.200 2.200-.9.300-.3 2.200-1.200 2.200" fill="none" stroke="#b589ec" stroke-width=".95"/><circle cx="8.700" cy="2" r=".9" fill="none" stroke="#ced0d6" stroke-width=".8"/></svg>
<div class="t" style="left:75.00px;top:575px;font:9px/1 'Liberation Sans',sans-serif;color:#dfe1e5;letter-spacing:0.024px">settings.gradle.kts</div>
<svg class="abs" style="left:39px;top:591.3px" width="4" height="6" viewBox="0 0 4 6" ><path d="M.6 .5L3.100 3 .6 5.500" fill="none" stroke="#b4b7bd" stroke-width="1.050"/></svg>
<svg class="abs" style="left:49.5px;top:589.6px" width="10.5" height="10" viewBox="0 0 10.5 10" ><path d="M1.200 8.800V1.800h2.300v7M3.500 1.800h2.200v7M.3 9h9.900M5.700 8.800V4l2.200-.6 1.500 5.400" fill="none" stroke="#ced0d6" stroke-width="1"/></svg>
<div class="t" style="left:62.00px;top:591px;font:9px/1 'Liberation Sans',sans-serif;color:#dfe1e5;letter-spacing:-0.096px">External Libraries</div>
<svg class="abs" style="left:39px;top:607.3px" width="4" height="6" viewBox="0 0 4 6" ><path d="M.6 .5L3.100 3 .6 5.500" fill="none" stroke="#b4b7bd" stroke-width="1.050"/></svg>
<svg class="abs" style="left:49.5px;top:605.6px" width="10.5" height="10" viewBox="0 0 10.5 10" ><path d="M.8 2.500h4.800v1.500h2v5.300H.8z" fill="#868a91"/><circle cx="8" cy="2.400" r="2.500" fill="#548af7"/><path d="M8 1.200v1.400h.9" fill="none" stroke="#2a2d2f" stroke-width=".7"/></svg>
<div class="t" style="left:62.00px;top:607px;font:9px/1 'Liberation Sans',sans-serif;color:#dfe1e5;letter-spacing:-0.116px">Scratches and Consoles</div>
</div></div>
<div class="abs" style="left:28px;top:666.300px;width:259px;height:5px;background:#4d4f54"></div>
<div class="abs" style="left:331.500px;top:53.300px;width:500px;height:1px;background:#2a2d2f"></div>
<div class="abs" style="left:331.500px;top:53px;width:87px;height:2px;background:#6e7074"></div>
<svg class="abs" style="left:338.6px;top:35.8px" width="11" height="11" viewBox="0 0 11 11" ><circle cx="4.800" cy="4.800" r="4.300" fill="#25324d" stroke="#548af7" stroke-width="1"/><path d="M5.600 3.300a1.700 1.700 0 1 0 0 3" fill="none" stroke="#9cb8f5" stroke-width=".9"/><rect x="6" y="6" width="4.300" height="4.300" fill="#1e2122" stroke="#c5a3ea" stroke-width=".8"/></svg>
<div class="t" style="left:353.10px;top:38px;font:9px/1 'Liberation Sans',sans-serif;color:#dfe1e5;letter-spacing:-0.129px">UserRole.kt</div>
<svg class="abs" style="left:405.7px;top:38.7px" width="5.6" height="5.6" viewBox="0 0 5.6 5.6" ><path d="M.3 .3l5 5M5.300 .3l-5 5" stroke="#868a91" stroke-width=".9"/></svg>
<svg class="abs" style="left:817px;top:37.5px" width="2.2" height="8.8" viewBox="0 0 2.2 8.8" ><circle cx="1.100" cy="1" r=".9" fill="#9da0a8"/><circle cx="1.100" cy="4.400" r=".9" fill="#9da0a8"/><circle cx="1.100" cy="7.800" r=".9" fill="#9da0a8"/></svg>
<div class="abs" style="left:363.500px;top:55px;width:1px;height:617px;background:#313438"></div>
<div class="abs" style="left:331.500px;top:142.500px;width:500px;height:17px;background:#26282e"></div>
<div class="abs" style="left:485.200px;top:107.600px;width:6.600px;height:17px;background:#43454a"></div>
<div class="abs" style="left:365.200px;top:142.500px;width:6.300px;height:17px;background:#43454a"></div>
<div class="t" style="left:345.00px;top:61px;font:10px/1 'Liberation Mono',monospace;color:#464b53;">1</div>
<div class="t" style="left:345.00px;top:78px;font:10px/1 'Liberation Mono',monospace;color:#464b53;">2</div>
<div class="t" style="left:345.00px;top:113px;font:10px/1 'Liberation Mono',monospace;color:#464b53;">3</div>
<div class="t" style="left:345.00px;top:130px;font:10px/1 'Liberation Mono',monospace;color:#464b53;">4</div>
<div class="t" style="left:345.00px;top:148px;font:10px/1 'Liberation Mono',monospace;color:#a1a3ab;">5</div>
<div class="t" style="left:365.50px;top:61px;font:10px/1 'Liberation Mono',monospace;color:#bcbec4;letter-spacing:-0.012px"><span style="color:#cd9470">package</span> ru.mironov.logistics</div>
<svg class="abs" style="left:367px;top:96px" width="7" height="7" viewBox="0 0 7 7" ><circle cx="3.500" cy="2" r="1.700" fill="#868a91"/><path d="M.2 7a3.300 3.300 0 0 1 6.600 0z" fill="#868a91"/></svg>
<div class="t" style="left:377.70px;top:96px;font:8.7px/1 'Liberation Sans',sans-serif;color:#868a91;letter-spacing:0.334px">Mironov Ury</div>
<div class="t" style="left:365.50px;top:113px;font:10px/1 'Liberation Mono',monospace;color:#bcbec4;letter-spacing:-0.017px"><span style="color:#cd9470">enum class</span> UserRole <span style="color:#e8eaef">{</span></div>
<div class="t" style="left:389.50px;top:130px;font:italic 10px/1 'Liberation Mono',monospace;color:#bcbec4;letter-spacing:-0.041px"><span style="color:#c085bf">COURIER</span>, <span style="color:#c085bf">DRIVER</span>, <span style="color:#c085bf">SERVICE_POINT_MANAGER</span>;</div>
<div class="t" style="left:365.50px;top:148px;font:10px/1 'Liberation Mono',monospace;color:#bcbec4;"><span style="color:#e8eaef">}</span></div>
<svg class="abs" style="left:817.5px;top:60.5px" width="8" height="7" viewBox="0 0 8 7" ><path d="M.8 3.600l2.300 2.300L7.200 .9" fill="none" stroke="#5fb865" stroke-width="1.500"/></svg>
<div class="abs" style="left:831.300px;top:54.500px;width:421.700px;height:1px;background:#232528"></div>
<div class="abs" style="left:831.300px;top:75.300px;width:421.700px;height:1px;background:#25272a"></div>
<div class="t" style="left:839.80px;top:39px;font:bold 9px/1 'Liberation Sans',sans-serif;color:#fff;letter-spacing:-0.054px">Running Devices</div>
<svg class="abs" style="left:932px;top:36.5px" width="9.5" height="10" viewBox="0 0 9.5 10" ><path d="M4.300 8.300H1.400a.8.800 0 0 1-.8-.8V1.300a.8.800 0 0 1 .8-.8h3.800a.8.800 0 0 1 .8.800v2.500" fill="none" stroke="#ced0d6" stroke-width=".9"/><rect x="4.600" y="5" width="3.600" height="3.200" rx=".4" fill="none" stroke="#ced0d6" stroke-width=".9"/><path d="M6.200 9.500l2.600-1.500v1.500z" fill="#57a66a" stroke="#57a66a" stroke-width=".6"/></svg>
<div class="t" style="left:944.50px;top:39px;font:9px/1 'Liberation Sans',sans-serif;color:#dfe1e5;letter-spacing:-0.036px">Pixel 4a API 30</div>
<svg class="abs" style="left:1012.8px;top:39px" width="5" height="5" viewBox="0 0 5 5" ><path d="M.3 .3l4.400 4.400M4.700 .3L.3 4.700" stroke="#6f737a" stroke-width=".9"/></svg>
<svg class="abs" style="left:1029.5px;top:37px" width="9" height="9" viewBox="0 0 9 9" ><path d="M4.500 0v9M0 4.500h9" stroke="#ced0d6" stroke-width=".9"/></svg>
<div class="abs" style="left:923.300px;top:53px;width:102px;height:2.500px;background:#3768c8;border-radius:1.200px"></div>
<svg class="abs" style="left:1200px;top:37.5px" width="9" height="8.5" viewBox="0 0 9 8.5" ><rect x=".5" y=".5" width="8" height="7.500" rx=".8" fill="none" stroke="#ced0d6" stroke-width=".9"/><path d="M.5 1.800h8" stroke="#ced0d6" stroke-width="1.800"/></svg>
<svg class="abs" style="left:1220.6px;top:37.5px" width="2.2" height="8.8" viewBox="0 0 2.2 8.8" ><circle cx="1.100" cy="1" r=".9" fill="#ced0d6"/><circle cx="1.100" cy="4.400" r=".9" fill="#ced0d6"/><circle cx="1.100" cy="7.800" r=".9" fill="#ced0d6"/></svg>
<div class="abs" style="left:1233.700px;top:41px;width:10px;height:1px;background:#ced0d6"></div>
<svg class="abs" style="left:839.8px;top:61.099999999999994px" width="10.4" height="10.4" viewBox="0 0 12 12" ><path d="M6 1.300v4M3.600 2.800a4.200 4.200 0 1 0 4.800 0" fill="none" stroke="#ced0d6" stroke-width="1.150"/></svg>
<svg class="abs" style="left:856.3px;top:61.099999999999994px" width="10.4" height="10.4" viewBox="0 0 12 12" ><path d="M.8 4.500h2L5.300 2.300v7.400L2.800 7.500h-2z" fill="none" stroke="#ced0d6" stroke-width="1.150"/><path d="M7 4.200a2.500 2.500 0 0 1 0 3.600M8.600 2.600a4.700 4.700 0 0 1 0 6.800" fill="none" stroke="#ced0d6" stroke-width="1.150"/></svg>
<svg class="abs" style="left:872.8px;top:61.099999999999994px" width="10.4" height="10.4" viewBox="0 0 12 12" ><path d="M1.800 4.500h2L6.300 2.300v7.400L3.800 7.500h-2z" fill="none" stroke="#ced0d6" stroke-width="1.150"/><path d="M8 4.500a2.200 2.200 0 0 1 0 3" fill="none" stroke="#ced0d6" stroke-width="1.150"/></svg>
<svg class="abs" style="left:890.8px;top:61.099999999999994px" width="10.4" height="10.4" viewBox="0 0 12 12" ><rect x="1.500" y="1.800" width="6" height="8.400" rx="1" fill="none" stroke="#ced0d6" stroke-width="1.150"/><path d="M9.800 3a5 5 0 0 1 0 6" fill="none" stroke="#548af7" stroke-width="1"/></svg>
<svg class="abs" style="left:908.8px;top:61.099999999999994px" width="10.4" height="10.4" viewBox="0 0 12 12" ><rect x="4.500" y="1.800" width="6" height="8.400" rx="1" fill="none" stroke="#ced0d6" stroke-width="1.150"/><path d="M2.200 3a5 5 0 0 0 0 6" fill="none" stroke="#548af7" stroke-width="1"/></svg>
<svg class="abs" style="left:926.3px;top:61.099999999999994px" width="10.4" height="10.4" viewBox="0 0 12 12" ><path d="M8 2.800v6.400L3.500 6z" fill="none" stroke="#ced0d6" stroke-width="1.150" stroke-linejoin="round"/></svg>
<svg class="abs" style="left:943.3px;top:61.099999999999994px" width="10.4" height="10.4" viewBox="0 0 12 12" ><circle cx="6" cy="6" r="3" fill="none" stroke="#ced0d6" stroke-width="1.150"/></svg>
<svg class="abs" style="left:960.3px;top:61.099999999999994px" width="10.4" height="10.4" viewBox="0 0 12 12" ><rect x="3.400" y="3.400" width="5.200" height="5.200" rx=".8" fill="none" stroke="#ced0d6" stroke-width="1.150"/></svg>
<svg class="abs" style="left:977.8px;top:61.099999999999994px" width="10.4" height="10.4" viewBox="0 0 12 12" ><path d="M1 3.800h2l1-1.500h4l1 1.500h2v6H1z" fill="none" stroke="#ced0d6" stroke-width="1.150" stroke-linejoin="round"/><circle cx="6" cy="6.700" r="1.700" fill="none" stroke="#ced0d6" stroke-width="1.150"/></svg>
<svg class="abs" style="left:995.3px;top:61.099999999999994px" width="10.4" height="10.4" viewBox="0 0 12 12" ><rect x=".6" y="2.800" width="8" height="6.500" rx="1" fill="none" stroke="#ced0d6" stroke-width="1.150"/><path d="M8.600 5.300l2.800-1.600v4.700L8.600 6.800" fill="none" stroke="#ced0d6" stroke-width="1.150" stroke-linejoin="round"/></svg>
<svg class="abs" style="left:1012.8px;top:61.099999999999994px" width="10.4" height="10.4" viewBox="0 0 12 12" ><path d="M2.300 3.400a4.200 4.200 0 1 1-.6 3.400M2.300 .8v2.700h2.700" fill="none" stroke="#ced0d6" stroke-width="1.150"/><path d="M6 4v2.300h1.800" fill="none" stroke="#ced0d6" stroke-width="1.150"/></svg>
<svg class="abs" style="left:1030.3px;top:61.099999999999994px" width="10.4" height="10.4" viewBox="0 0 12 12" ><rect x=".6" y="2" width="8.500" height="5.800" rx="1" fill="none" stroke="#ced0d6" stroke-width="1.150"/><rect x="6.200" y="6" width="5" height="4.600" rx=".6" fill="#2a2d2f" stroke="#ced0d6" stroke-width=".95"/><path d="M7.500 8.300h2.500" fill="none" stroke="#ced0d6" stroke-width="1.150"/></svg>
<svg class="abs" style="left:1051px;top:62px" width="2.2" height="8.8" viewBox="0 0 2.2 8.8" ><circle cx="1.100" cy="1" r=".9" fill="#ced0d6"/><circle cx="1.100" cy="4.400" r=".9" fill="#ced0d6"/><circle cx="1.100" cy="7.800" r=".9" fill="#ced0d6"/></svg>
<div class="abs" style="left:1224px;top:586.200px;width:16.500px;height:71px;border:1px solid #34373a;border-radius:3px"></div>
<svg class="abs" style="left:1227.6px;top:591.3px" width="8.4" height="8.4" viewBox="0 0 8.4 8.4" ><path d="M4.200 0v8.400M0 4.200h8.400" stroke="#ced0d6" stroke-width=".9"/></svg>
<div class="abs" style="left:1228px;top:612.700px;width:8px;height:1px;background:#5a5d63"></div>
<div class="t" style="left:1227.80px;top:628px;font:bold 7.5px/1 'Liberation Sans',sans-serif;color:#e3e5e9;transform:scaleX(0.7931);transform-origin:0 0">1:1</div>
<svg class="abs" style="left:1227.5px;top:644px" width="9" height="8.5" viewBox="0 0 9 8.5" ><rect x=".5" y=".5" width="8" height="7.500" rx="1" fill="none" stroke="#5a5d63" stroke-width=".9"/><path d="M2.800 6V3.500h3.400" fill="none" stroke="#5a5d63" stroke-width=".9"/></svg>
<div class="abs" style="left:904.300px;top:77.200px;width:274.400px;height:594.800px;background:#cecece"></div>
<div class="abs" style="left:904.300px;top:77.200px;width:274.400px;height:55.800px;background:#2bc48f"></div>
<div class="t" style="left:910.90px;top:82px;font:10.3px/1 'Liberation Sans',sans-serif;color:#e4fbf2;-webkit-text-stroke:.55px #e4fbf2;letter-spacing:-0.303px">11:22</div>
<svg class="abs" style="left:942.6px;top:81px" width="10" height="10" viewBox="0 0 10 10" ><circle cx="5" cy="5" r="5" fill="#e4fbf2"/><path d="M3.700 2.400v4.200" stroke="#1d7a5a" stroke-width="1.400"/><path d="M5.300 2.300h1.500v1.500H5.300z" fill="#1d7a5a"/></svg>
<svg class="abs" style="left:959.4px;top:81.3px" width="8" height="9.3" viewBox="0 0 8 9.3" ><path d="M2.600 .3H6.600a1.200 1.200 0 0 1 1.200 1.200v6.300a1.200 1.200 0 0 1-1.200 1.200H1.400a1.200 1.200 0 0 1-1.200-1.200V2.700z" fill="#e4fbf2"/></svg>
<svg class="abs" style="left:1142.9px;top:81px" width="31" height="9.5" viewBox="0 0 31 9.5" ><path d="M0 2.700Q5.050 -2 10.100 2.700L5.050 8.500z" fill="#e4fbf2"/><path d="M11 8.800H20.200V.6z" fill="#e4fbf2"/><path d="M17.300 8.800V4.800l1.400-1.300V8.800z" fill="#2bc48f" opacity=".75"/><path d="M26.900 .2h1.900v1.200h1.200a.5.5 0 0 1 .5.500v6.600a.5.500 0 0 1-.5.500h-4.300a.5.500 0 0 1-.5-.5V1.900a.5.500 0 0 1 .5-.5h1.200z" fill="#e4fbf2"/></svg>
<svg class="abs" style="left:918.1px;top:109.4px" width="12.5" height="9.2" viewBox="0 0 12.5 9.2" ><path d="M0 .8h12.500M0 4.600h12.500M0 8.400h12.500" stroke="#e4fbf2" stroke-width="1.700"/></svg>
<div class="t" style="left:955.50px;top:108px;font:14.4px/1 'Liberation Sans',sans-serif;color:#e4fbf2;-webkit-text-stroke:.6px #e4fbf2;letter-spacing:0.138px">Регистрация посылки</div>
<div class="abs" style="left:914.800px;top:144px;width:253.400px;height:401.600px;background:#fff;border-radius:14px;box-shadow:0 1px 1.500px rgba(0,0,0,.3)"></div>
<div class="t" style="left:932.80px;top:166px;font:17.2px/1 'Liberation Sans',sans-serif;color:#161616;-webkit-text-stroke:.3px #161616;letter-spacing:0.126px">Номер посылки :</div>
<div class="t" style="left:932.80px;top:186px;font:17.2px/1 'Liberation Sans',sans-serif;color:#161616;-webkit-text-stroke:.3px #161616;letter-spacing:-0.051px">1704540163380</div>
<div class="t" style="left:932.80px;top:210px;font:17.2px/1 'Liberation Sans',sans-serif;color:#161616;-webkit-text-stroke:.3px #161616;letter-spacing:-0.196px">Имя : 2</div>
<div class="t" style="left:932.80px;top:233px;font:17.2px/1 'Liberation Sans',sans-serif;color:#161616;-webkit-text-stroke:.3px #161616;letter-spacing:-0.089px">Фамилия : 2</div>
<div class="t" style="left:932.80px;top:256px;font:17.2px/1 'Liberation Sans',sans-serif;color:#161616;-webkit-text-stroke:.3px #161616;letter-spacing:0.081px">Адрес доставки : 2</div>
<div class="t" style="left:932.80px;top:280px;font:17.2px/1 'Liberation Sans',sans-serif;color:#161616;-webkit-text-stroke:.3px #161616;letter-spacing:-0.114px">Имя отправителя : 1</div>
<div class="t" style="left:932.80px;top:303px;font:17.2px/1 'Liberation Sans',sans-serif;color:#161616;-webkit-text-stroke:.3px #161616;letter-spacing:-0.042px">Фамилия отправителя : 1</div>
<div class="t" style="left:932.80px;top:326px;font:17.2px/1 'Liberation Sans',sans-serif;color:#161616;-webkit-text-stroke:.3px #161616;letter-spacing:-0.094px">Адрес отправителя : 1</div>
<div class="t" style="left:932.80px;top:349px;font:17.2px/1 'Liberation Sans',sans-serif;color:#161616;-webkit-text-stroke:.3px #161616;letter-spacing:0.025px">Город отправителя :</div>
<div class="t" style="left:932.80px;top:370px;font:17.2px/1 'Liberation Sans',sans-serif;color:#161616;-webkit-text-stroke:.3px #161616;letter-spacing:0.259px">Moscow</div>
<div class="t" style="left:932.80px;top:394px;font:17.2px/1 'Liberation Sans',sans-serif;color:#161616;-webkit-text-stroke:.3px #161616;letter-spacing:0.026px">Город назначения :</div>
<div class="t" style="left:932.80px;top:414px;font:17.2px/1 'Liberation Sans',sans-serif;color:#161616;-webkit-text-stroke:.3px #161616;letter-spacing:-0.066px">Novgorod</div>
<div class="t" style="left:932.80px;top:438px;font:17.2px/1 'Liberation Sans',sans-serif;color:#161616;-webkit-text-stroke:.3px #161616;letter-spacing:0.013px">Время регистрации :</div>
<div class="t" style="left:932.80px;top:458px;font:17.2px/1 'Liberation Sans',sans-serif;color:#161616;-webkit-text-stroke:.3px #161616;letter-spacing:-0.008px">06.01.2024 11:22</div>
<div class="abs" style="left:932.300px;top:499.700px;width:169.600px;height:24.500px;background:#2bc48f;border-radius:1.500px;box-shadow:0 .5px 1.500px rgba(0,0,0,.4)"></div>
<div class="t" style="left:944.40px;top:508px;font:bold 10.5px/1 'Liberation Sans',sans-serif;color:#e4fbf2;letter-spacing:0.061px">Зарегистрировать посылку</div>
<div class="abs" style="left:904.300px;top:638.500px;width:274.400px;height:33.500px;background:#2bc48f"></div>
<svg class="abs" style="left:956.8px;top:649.7px" width="10.7" height="11.8" viewBox="0 0 10.7 11.8" ><path d="M10.700 0v11.800L0 5.900z" fill="#c4f1e0"/></svg>
<div class="abs" style="left:1036.400px;top:650.300px;width:10.500px;height:10.500px;border-radius:50%;background:#c4f1e0"></div>
<div class="abs" style="left:1115.200px;top:650.300px;width:10.500px;height:10.500px;border-radius:1px;background:#c4f1e0"></div>
<svg class="abs" style="left:1121px;top:446.4px" width="8.5" height="12.5" viewBox="0 0 8.5 12.5" ><path d="M.5 .5v9.800l2.300-2.100 1.600 3.700 1.300-.6-1.600-3.600h3.200z" fill="#fff" stroke="#333" stroke-width=".7" stroke-linejoin="round"/></svg>
<svg class="abs" style="left:1260.5px;top:35px" width="13" height="13" viewBox="0 0 13 13" ><path d="M2.700 9.300V6a3.800 3.800 0 0 1 5.300-3.500M10.300 7v2.300l1 1.400H1.700l1-1.400M5 11.500a1.500 1.500 0 0 0 3 0" fill="none" stroke="#ced0d6" stroke-width="1.150"/><circle cx="10.300" cy="2.600" r="2.100" fill="#548af7"/></svg>
<svg class="abs" style="left:1259.5px;top:62px" width="14.5" height="12" viewBox="0 0 14.5 12" ><path d="M.8 10V6.800c0-2.700 1.800-4.500 4.400-4.500 1.800 0 3.100.9 3.600 2.200.7-1.300 1.800-2.200 3.200-2.200 1.500 0 2 1.500 1.200 2.500-.8 1-2.400.5-2.400.5M.8 10h2.100V8.200h2.200V10h2.100V7.600" fill="none" stroke="#ced0d6" stroke-width="1.150"/></svg>
<svg class="abs" style="left:1260.5px;top:88.5px" width="12.5" height="13" viewBox="0 0 12.5 13" ><rect x=".6" y=".6" width="7.400" height="10.500" rx="1.200" fill="none" stroke="#ced0d6" stroke-width="1.150"/><path d="M6 9.200a2.600 2.600 0 0 1 5.200 0v2.700H6z" fill="#2a2d2f" stroke="#ced0d6" stroke-width="1.100"/></svg>
<div class="abs" style="left:1256.500px;top:111.300px;width:20px;height:20px;background:#3574f0;border-radius:4px"></div>
<svg class="abs" style="left:1260.5px;top:115px" width="12.5" height="13" viewBox="0 0 12.5 13" ><rect x=".6" y=".6" width="7.400" height="10.500" rx="1.200" fill="none" stroke="#fff" stroke-width="1.100"/><rect x="5.500" y="6.500" width="5.500" height="4.500" rx=".6" fill="#3574f0" stroke="#fff" stroke-width="1.100"/><path d="M8.500 12.700l3.500-2v2z" fill="#5fd069"/></svg>
<div class="abs" style="left:9.200px;top:680.300px;width:5.800px;height:5.800px;border:1.200px solid #548af7;border-radius:1.500px"></div>
<div class="t" style="left:17.50px;top:680px;font:9px/1 'Liberation Sans',sans-serif;color:#a4a7ae;letter-spacing:-0.055px">logistics_kmm</div>
<svg class="abs" style="left:79.7px;top:680.7px" width="4" height="6" viewBox="0 0 4 6" ><path d="M.6 .5L3.100 3 .6 5.500" fill="none" stroke="#9da0a8" stroke-width="1.050"/></svg>
<div class="abs" style="left:89.800px;top:680.300px;width:5.800px;height:5.800px;border:1.200px solid #548af7;border-radius:1.500px"></div>
<div class="t" style="left:98.00px;top:680px;font:9px/1 'Liberation Sans',sans-serif;color:#a4a7ae;letter-spacing:0.138px">desktop</div>
<svg class="abs" style="left:136.4px;top:680.7px" width="4" height="6" viewBox="0 0 4 6" ><path d="M.6 .5L3.100 3 .6 5.500" fill="none" stroke="#9da0a8" stroke-width="1.050"/></svg>
<svg class="abs" style="left:148px;top:679.3px" width="8" height="8" viewBox="0 0 8 8" ><rect x=".5" y=".5" width="7" height="7" rx=".8" fill="none" stroke="#a4a7ae" stroke-width=".9"/><path d="M2.800 3a1.200 1.200 0 1 1 1.800 1c-.4.300-.6.500-.6 1M4 6v.6" fill="none" stroke="#a4a7ae" stroke-width=".8"/></svg>
<div class="t" style="left:160.00px;top:680px;font:9px/1 'Liberation Sans',sans-serif;color:#a4a7ae;letter-spacing:-0.028px">logistics.db</div>
<svg class="abs" style="left:1257px;top:678.5px" width="10.5" height="10" viewBox="0 0 10.5 10" ><path d="M.6 .6h9.300v6.300H5.300L3 8.900V6.900H.6z" fill="none" stroke="#ced0d6" stroke-width="1" stroke-linejoin="round"/><path d="M3 3.800h4.500" stroke="#ced0d6" stroke-width=".9"/></svg>
<div class="abs" style="left:0;top:693.400px;width:1280px;height:26.600px;background:#201d1b"></div>
<div class="abs" style="left:485.700px;top:693.400px;width:106.600px;height:26.600px;background:#484746"></div>
<div class="abs" style="left:134.4px;top:718.200px;width:100.4px;height:1.800px;background:#86b5e4"></div>
<div class="abs" style="left:241.3px;top:718.200px;width:101.7px;height:1.800px;background:#86b5e4"></div>
<div class="abs" style="left:381.6px;top:718.200px;width:101.8px;height:1.800px;background:#86b5e4"></div>
<div class="abs" style="left:485.7px;top:718.200px;width:106.6px;height:1.800px;background:#86b5e4"></div>
<div class="abs" style="left:595.3px;top:718.200px;width:101.6px;height:1.800px;background:#86b5e4"></div>
<div class="abs" style="left:703px;top:718.200px;width:101.6px;height:1.800px;background:#86b5e4"></div>
<svg class="abs" style="left:10.7px;top:701.3px" width="11.3" height="10.4" viewBox="0 0 11.3 10.4" ><path d="M0 1.400l4.700-.7v4.300H0zM5.500 .6L11.300 -.2v5.200H5.500zM0 5.700h4.700v4.200L0 9.300zM5.500 5.700h5.800v5L5.500 9.900z" fill="#fff"/></svg>
<svg class="abs" style="left:40.8px;top:699.6px" width="14.6" height="14.4" viewBox="0 0 14.6 14.4" ><circle cx="8.800" cy="5.600" r="4.700" fill="none" stroke="#fff" stroke-width="1.600"/><path d="M5.300 9.300L.8 13.800" stroke="#fff" stroke-width="1.900"/></svg>
<svg class="abs" style="left:74.5px;top:699.5px" width="15.5" height="14" viewBox="0 0 15.5 14" ><rect x="1.500" y=".8" width="12" height="8.800" rx=".8" fill="#c9ced6"/><rect x="3.300" y="2.200" width="8" height="5.500" fill="#a9c9e6"/><path d="M3.300 7.700l2.500-3 2 2.200 1.300-1.300 2.200 2.100z" fill="#9db58c"/><path d="M4 9.600l-2.500 3.600h12.500L12 9.600z" fill="#aeb3bb"/></svg>
<svg class="abs" style="left:106.9px;top:699px" width="15.4" height="15" viewBox="0 0 15.4 15" ><rect x="1" y=".5" width="13" height="9" rx=".8" fill="#2e6fc4" stroke="#d4dbe4" stroke-width="1"/><path d="M3 3h9M3 5h9M3 7h6" stroke="#8fbaf0" stroke-width=".9"/><rect x="5" y="10" width="6" height="2" fill="#aab2bc"/><rect x="3" y="12" width="10" height="2.500" rx=".6" fill="#cfd5dc"/></svg>
<svg class="abs" style="left:139.8px;top:700.5px" width="10" height="12.5" viewBox="0 0 10 12.5" ><path d="M0 .5h4l1 1h5v11H0z" fill="#f3c74f"/><path d="M0 .5h3.200v12H0z" fill="#dba833"/><path d="M3.200 2.500h6.800v10H3.200z" fill="#f8d875"/></svg>
<div class="t" style="left:156.90px;top:704px;font:8.2px/1 'Liberation Sans',sans-serif;color:#fff;letter-spacing:-0.278px">Desktop</div>
<svg class="abs" style="left:245.2px;top:698.3px" width="16.3" height="16.3" viewBox="0 0 16.3 16.3" ><circle cx="8.150" cy="8.150" r="8.150" fill="#e34133"/><path d="M8.150 8.150L1.100 4.100A8.150 8.150 0 0 0 8.150 16.300z" fill="#2da94f"/><path d="M8.150 8.150V16.300A8.150 8.150 0 0 0 15.200 4.100z" fill="#fdbd00"/><path d="M1.100 4.100A8.150 8.150 0 0 1 15.200 4.100L8.150 8.150z" fill="#e34133"/><circle cx="8.150" cy="8.150" r="3.800" fill="#fff"/><circle cx="8.150" cy="8.150" r="3" fill="#3e82f1"/></svg>
<div class="t" style="left:264.30px;top:704px;font:8.2px/1 'Liberation Sans',sans-serif;color:#fff;letter-spacing:-0.133px">mironoff200756: M...</div>
<svg class="abs" style="left:354.6px;top:699px" width="17" height="14.5" viewBox="0 0 17 14.5" ><ellipse cx="8" cy="5.500" rx="7.500" ry="4" transform="rotate(-22 8 5.500)" fill="#e4e1e6"/><ellipse cx="7.500" cy="5.200" rx="4.500" ry="1.800" transform="rotate(-22 7.500 5.200)" fill="#c9707a"/><path d="M9 8.500l3 4.500 2.500-1.800-1.500-4z" fill="#4f7fc9"/></svg>
<svg class="abs" style="left:385.6px;top:698.6px" width="15.7" height="15.7" viewBox="0 0 15.7 15.7" ><circle cx="7.850" cy="7.850" r="7.850" fill="#2aa2de"/><path d="M3 7.600l8.800-3.500-1.400 7.700-3-2.200-1.500 1.400V8.900l4.300-3.600-5.300 3.200z" fill="#fff"/><rect x="6.500" y="10.500" width="8" height="5" rx="1" fill="#8d9094"/></svg>
<div class="t" style="left:404.10px;top:704px;font:8.2px/1 'Liberation Sans',sans-serif;color:#fff;letter-spacing:-0.126px">(1) Mobile Develop...</div>
<svg class="abs" style="left:492.7px;top:698.6px" width="15.5" height="15.5" viewBox="0 0 15.5 15.5" ><path d="M7.750 0l1.700 1.200 2.100-.2.900 1.900 1.900.9-.2 2.100 1.200 1.700-1.200 1.700.2 2.100-1.900.9-.9 1.900-2.100-.2-1.700 1.200-1.700-1.200-2.100.2-.9-1.900-1.900-.9.200-2.100L.15 7.600l1.200-1.700-.2-2.100 1.900-.9.900-1.900 2.100.2z" fill="#eef3fb"/><path d="M7.750 3.300l3.300 8h-1.600L7.750 6.700 6.050 11.300H4.450z" fill="#3b78e7"/><circle cx="7.750" cy="7.600" r="1" fill="#eef3fb"/></svg>
<div class="t" style="left:511.50px;top:704px;font:8.2px/1 'Liberation Sans',sans-serif;color:#fff;letter-spacing:-0.227px">Logistics – Register...</div>
<svg class="abs" style="left:600.7px;top:699.2px" width="13.5" height="14.5" viewBox="0 0 13.5 14.5" ><rect x=".5" y=".5" width="12.500" height="13.500" fill="#0d0d10"/><path d="M.5 14V.5H13" fill="none" stroke="#f0406d" stroke-width="1.200"/><path d="M13 .5V14H.5" fill="none" stroke="#3b7bf0" stroke-width="1.200"/><path d="M3.300 3.300h2.200M4.400 3.300v4M3.300 7.300h2.200M7.800 3.300v3c0 1-1 1.200-1.600.8" fill="none" stroke="#fff" stroke-width=".9"/><path d="M3 10.800h4" stroke="#fff" stroke-width=".9"/></svg>
<div class="t" style="left:618.40px;top:704px;font:8.2px/1 'Liberation Sans',sans-serif;color:#fff;letter-spacing:-0.104px">ru.logistics.logistics...</div>
<svg class="abs" style="left:707.6px;top:698px" width="14.6" height="16.5" viewBox="0 0 14.6 16.5" ><path d="M3 1c-2 .5-3 3-2.500 6 .4 2.500 1.500 5.500 3 5.500.8 0 1.200-.8 1.300-1.600.5.300 1.200.3 1.700 0 .2 1.500.3 4.500 2 5 1.500.4 2.300-.8 2.400-2.700 1.500-.2 2.700-.8 3.200-1.500-1 .2-1.800 0-2.300-.3 1.500-2.500 2.300-6 1.500-8.200C12.500 1 10.500.3 8.500 1 6.700.2 4.700.4 3 1z" fill="#5b8cc4" stroke="#dbe6f3" stroke-width=".9"/><path d="M5.500 3.500c.5 2 .3 5-.7 7M8.700 2c1.300 1 1.500 4 .3 6.500" fill="none" stroke="#dbe6f3" stroke-width=".8"/></svg>
<div class="t" style="left:726.40px;top:704px;font:8.2px/1 'Liberation Sans',sans-serif;color:#fff;letter-spacing:-0.040px">pgAdmin 4</div>
<svg class="abs" style="left:1065.9px;top:703.8px" width="8.4" height="5.6" viewBox="0 0 8.4 5.6" ><path d="M.5 5l3.700-4 3.700 4" fill="none" stroke="#fff" stroke-width="1.100"/></svg>
<svg class="abs" style="left:1081.6px;top:701px" width="8.1" height="10.8" viewBox="0 0 8.1 10.8" ><rect x="2.200" y="0" width="3.700" height="7" rx="1.850" fill="#f2f2f2"/><path d="M.5 5a3.550 3.550 0 0 0 7.100 0M4.050 8.600v2" fill="none" stroke="#bdbdbd" stroke-width=".9"/></svg>
<div class="t" style="left:1096.80px;top:704px;font:7.3px/1 'Liberation Sans',sans-serif;color:#e0e0e0;letter-spacing:-0.252px">7.3</div>
<div class="abs" style="left:1112.800px;top:701.900px;width:10.200px;height:10.300px;background:#ec8a3e"></div>
<div class="t" style="left:1114.20px;top:705px;font:6.8px/1 'Liberation Sans',sans-serif;color:#f7d9bf;letter-spacing:-0.081px">47</div>
<div class="abs" style="left:1128.500px;top:701.900px;width:10.500px;height:10.300px;background:#30d93c"></div>
<div class="t" style="left:1130.20px;top:705px;font:6.8px/1 'Liberation Sans',sans-serif;color:#a9f5ae;letter-spacing:-0.081px">53</div>
<svg class="abs" style="left:1144.6px;top:702.3px" width="9.5" height="9.5" viewBox="0 0 9.5 9.5" ><path d="M.5 3.300h1.800L4.500 1.200v7.100L2.300 6.200H.5z" fill="none" stroke="#fff" stroke-width=".8"/><path d="M6 3.300a2 2 0 0 1 0 2.900M7.300 2a4 4 0 0 1 0 5.500M8.600 .8a6 6 0 0 1 0 7.900" fill="none" stroke="#d0d0d0" stroke-width=".7"/></svg>
<svg class="abs" style="left:1162.3px;top:702.5px" width="9.5" height="9.5" viewBox="0 0 9.5 9.5" ><path d="M.3 9.200A8.900 8.900 0 0 1 9.200 .3M3 9.200A6.200 6.200 0 0 1 9.200 3M5.700 9.200A3.500 3.500 0 0 1 9.200 5.700" fill="none" stroke="#e6e6e6" stroke-width=".9"/><circle cx="8.600" cy="8.600" r=".9" fill="#e6e6e6"/></svg>
<div class="t" style="left:1178.20px;top:704px;font:8px/1 'Liberation Sans',sans-serif;color:#fff;transform:scaleX(0.8649);transform-origin:0 0">ENG</div>
<div class="t" style="left:1212.50px;top:698px;font:8.2px/1 'Liberation Sans',sans-serif;color:#fff;transform:scaleX(0.8439);transform-origin:0 0">14:22</div>
<div class="t" style="left:1202.20px;top:710px;font:8.2px/1 'Liberation Sans',sans-serif;color:#fff;letter-spacing:-0.288px">06/01/2024</div>
<svg class="abs" style="left:1252.4px;top:701px" width="11.3" height="10.8" viewBox="0 0 11.3 10.8" ><path d="M0 0h11.300v8H6.800L4.500 10.600V8H0z" fill="#fff"/><path d="M2.300 2.700h6.700M2.300 5h6.700" stroke="#1d1c1b" stroke-width=".9"/></svg>
</div></body></html>
